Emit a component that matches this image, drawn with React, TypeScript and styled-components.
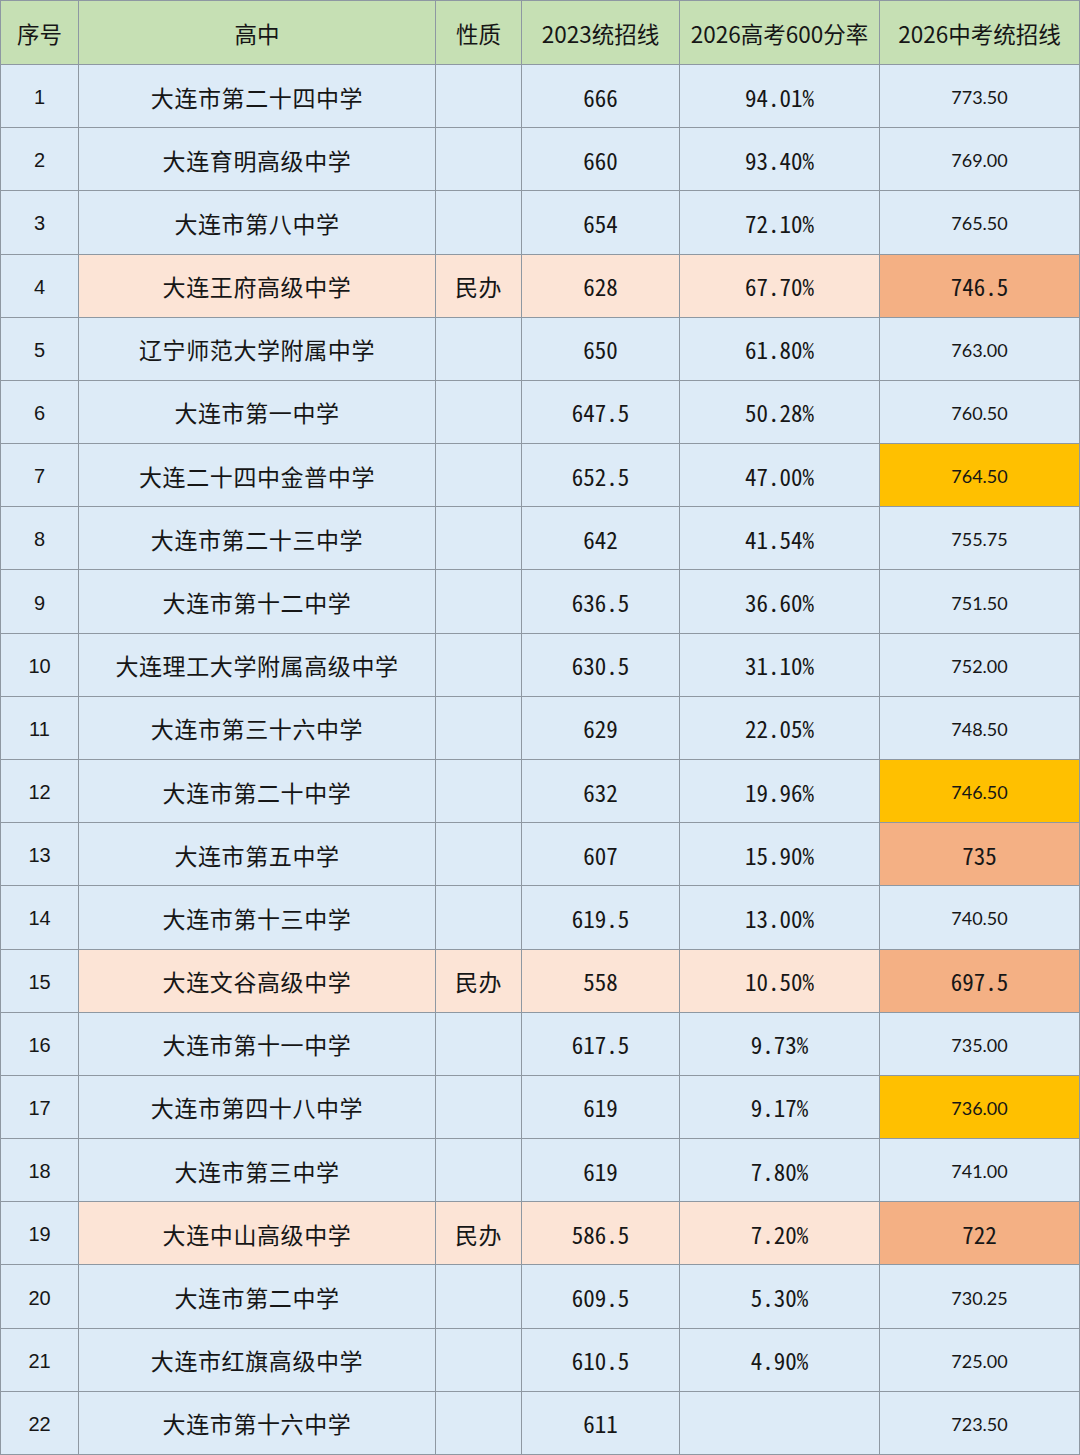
import React from "react";
import styled, { createGlobalStyle } from "styled-components";

const Global = createGlobalStyle`
  html, body { margin: 0; padding: 0; background: #ddebf7; }
  * { box-sizing: border-box; }
`;

type Tone = "blue" | "peach" | "orange" | "gold" | "head";
type Face = "head" | "cjk" | "mono" | "index" | "narrow";

const bg: Record<Tone, string> = {
  blue: "#ddebf7",
  peach: "#fce4d6",
  orange: "#f4b084",
  gold: "#ffc000",
  head: "#c6e0b4",
};

const fonts: Record<Face, string> = {
  head: `"Noto Sans CJK SC", "Noto Sans", sans-serif`,
  cjk: `"Noto Sans CJK SC", "Noto Sans", sans-serif`,
  mono: `"Noto Sans Mono CJK SC", "DejaVu Sans Mono", "Noto Sans CJK SC", monospace`,
  index: `"Liberation Sans", "Noto Sans CJK SC", sans-serif`,
  narrow: `"Lato", "Noto Sans CJK SC", sans-serif`,
};

const sizes: Record<Face, string> = {
  head: "22.5px",
  cjk: "23px",
  mono: "23px",
  index: "20px",
  narrow: "18px",
};

const spacing: Record<Face, string> = {
  head: "0",
  cjk: "0.6px",
  mono: "0",
  index: "0",
  narrow: "0",
};

const Grid = styled.div`
  display: grid;
  grid-template-columns: 78px 357px 86px 158px 200px 1fr;
  grid-template-rows: 64px repeat(22, 1fr);
  width: 1080px;
  height: 1455px;
  border-left: 1px solid #8e98a2;
  border-top: 1px solid #8e98a2;
`;

const Cell = styled.div<{ $tone: Tone; $face: Face }>`
  display: flex;
  align-items: center;
  justify-content: center;
  background: ${(p) => bg[p.$tone]};
  border-right: 1px solid #8e98a2;
  border-bottom: 1px solid #8e98a2;
  color: #161616;
  white-space: nowrap;
  font-family: ${(p) => fonts[p.$face]};
  font-size: ${(p) => sizes[p.$face]};
  letter-spacing: ${(p) => spacing[p.$face]};
  line-height: 1;
  padding-top: 2px;
`;

type Row = {
  n: number;
  name: string;
  kind: string;
  y23: string;
  rate: string;
  line: string;
  lineTone: Tone;
};

const rows: Row[] = [
  { n: 1, name: "大连市第二十四中学", kind: "", y23: "666", rate: "94.01%", line: "773.50", lineTone: "blue" },
  { n: 2, name: "大连育明高级中学", kind: "", y23: "660", rate: "93.40%", line: "769.00", lineTone: "blue" },
  { n: 3, name: "大连市第八中学", kind: "", y23: "654", rate: "72.10%", line: "765.50", lineTone: "blue" },
  { n: 4, name: "大连王府高级中学", kind: "民办", y23: "628", rate: "67.70%", line: "746.5", lineTone: "orange" },
  { n: 5, name: "辽宁师范大学附属中学", kind: "", y23: "650", rate: "61.80%", line: "763.00", lineTone: "blue" },
  { n: 6, name: "大连市第一中学", kind: "", y23: "647.5", rate: "50.28%", line: "760.50", lineTone: "blue" },
  { n: 7, name: "大连二十四中金普中学", kind: "", y23: "652.5", rate: "47.00%", line: "764.50", lineTone: "gold" },
  { n: 8, name: "大连市第二十三中学", kind: "", y23: "642", rate: "41.54%", line: "755.75", lineTone: "blue" },
  { n: 9, name: "大连市第十二中学", kind: "", y23: "636.5", rate: "36.60%", line: "751.50", lineTone: "blue" },
  { n: 10, name: "大连理工大学附属高级中学", kind: "", y23: "630.5", rate: "31.10%", line: "752.00", lineTone: "blue" },
  { n: 11, name: "大连市第三十六中学", kind: "", y23: "629", rate: "22.05%", line: "748.50", lineTone: "blue" },
  { n: 12, name: "大连市第二十中学", kind: "", y23: "632", rate: "19.96%", line: "746.50", lineTone: "gold" },
  { n: 13, name: "大连市第五中学", kind: "", y23: "607", rate: "15.90%", line: "735", lineTone: "orange" },
  { n: 14, name: "大连市第十三中学", kind: "", y23: "619.5", rate: "13.00%", line: "740.50", lineTone: "blue" },
  { n: 15, name: "大连文谷高级中学", kind: "民办", y23: "558", rate: "10.50%", line: "697.5", lineTone: "orange" },
  { n: 16, name: "大连市第十一中学", kind: "", y23: "617.5", rate: "9.73%", line: "735.00", lineTone: "blue" },
  { n: 17, name: "大连市第四十八中学", kind: "", y23: "619", rate: "9.17%", line: "736.00", lineTone: "gold" },
  { n: 18, name: "大连市第三中学", kind: "", y23: "619", rate: "7.80%", line: "741.00", lineTone: "blue" },
  { n: 19, name: "大连中山高级中学", kind: "民办", y23: "586.5", rate: "7.20%", line: "722", lineTone: "orange" },
  { n: 20, name: "大连市第二中学", kind: "", y23: "609.5", rate: "5.30%", line: "730.25", lineTone: "blue" },
  { n: 21, name: "大连市红旗高级中学", kind: "", y23: "610.5", rate: "4.90%", line: "725.00", lineTone: "blue" },
  { n: 22, name: "大连市第十六中学", kind: "", y23: "611", rate: "", line: "723.50", lineTone: "blue" },
];

const headers = ["序号", "高中", "性质", "2023统招线", "2026高考600分率", "2026中考统招线"];

export default function App() {
  return (
    <>
      <Global />
      <Grid>
        {headers.map((h) => (
          <Cell key={h} $tone="head" $face="head">
            {h}
          </Cell>
        ))}
        {rows.map((r) => {
          const t: Tone = r.kind ? "peach" : "blue";
          const lineFace: Face = r.lineTone === "orange" ? "mono" : "narrow";
          return (
            <React.Fragment key={r.n}>
              <Cell $tone="blue" $face="index">{r.n}</Cell>
              <Cell $tone={t} $face="cjk">{r.name}</Cell>
              <Cell $tone={t} $face="cjk">{r.kind}</Cell>
              <Cell $tone={t} $face="mono">{r.y23}</Cell>
              <Cell $tone={t} $face="mono">{r.rate}</Cell>
              <Cell $tone={r.lineTone} $face={lineFace}>{r.line}</Cell>
            </React.Fragment>
          );
        })}
      </Grid>
    </>
  );
}
